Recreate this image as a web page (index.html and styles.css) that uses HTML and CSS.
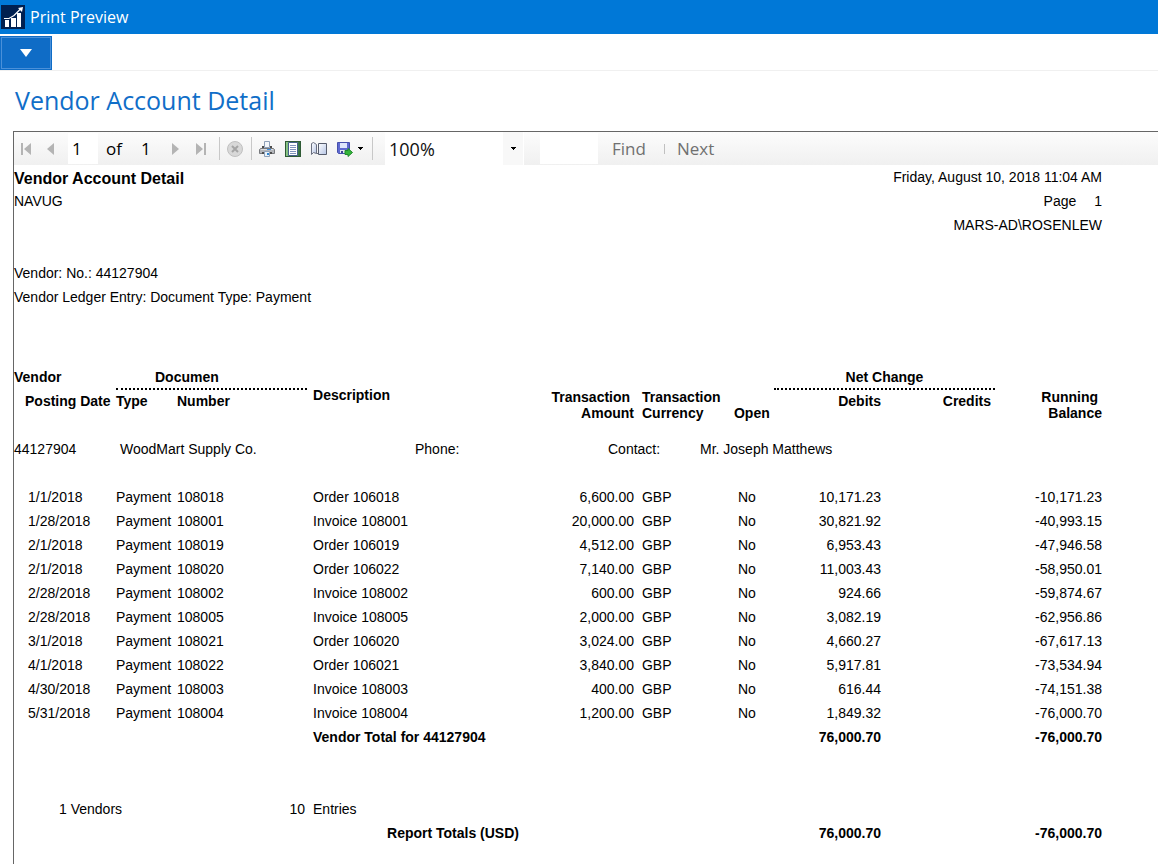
FILE: index.html
```html
<!DOCTYPE html>
<html lang="en">
<head>
  <meta charset="UTF-8">
  <meta name="viewport" content="width=device-width, initial-scale=1.0">
  <title>Print Preview</title>
  <link rel="stylesheet" href="styles.css">
</head>
<body>
  <header class="titlebar">
    <svg class="logo" width="24" height="24" viewBox="0 0 24 24">
      <rect width="24" height="24" fill="#002050"/>
      <path d="M4 15h4v7H4zM10 13h5v9h-5zM16 8h4v14h-4z" fill="#fff"/>
      <path d="M3 13.500h5l5-3 7-7" fill="none" stroke="#fff" stroke-width="1.200"/>
      <path d="M17 3l5-1-1 5z" fill="#fff"/>
    </svg>
    <span>Print Preview</span>
  </header>

  <nav class="ribbon">
    <button class="app-menu" aria-label="Application menu">
      <svg width="12" height="8" viewBox="0 0 12 8"><path d="M0 0h12L6 8z" fill="#fff"/></svg>
    </button>
  </nav>

  <h1>Vendor Account Detail</h1>

  <main class="viewer">
    <div class="toolbar">
      <div class="pager">
        <button aria-label="First page"><svg width="12" height="14" viewBox="0 0 12 14"><path d="M1 1h2v12H1zM11 1v12L4 7z" fill="#b4b4b4"/></svg></button>
        <button aria-label="Previous page"><svg width="12" height="14" viewBox="0 0 12 14"><path d="M9 1v12L2 7z" fill="#b4b4b4"/></svg></button>
        <input type="text" class="page-input" value="1" aria-label="Current page">
        <span class="of">of</span>
        <span class="count">1</span>
        <button aria-label="Next page"><svg width="12" height="14" viewBox="0 0 12 14"><path d="M3 1v12l7-6z" fill="#b4b4b4"/></svg></button>
        <button aria-label="Last page"><svg width="12" height="14" viewBox="0 0 12 14"><path d="M9 1h2v12H9zM1 1v12l7-6z" fill="#b4b4b4"/></svg></button>
      </div>
      <div class="group">
        <button aria-label="Stop">
          <svg width="16" height="16" viewBox="0 0 16 16"><circle cx="8" cy="8" r="7.500" fill="#d8d8d8" stroke="#c0c0c0"/><path d="M5 5l6 6M11 5l-6 6" stroke="#a4a4a4" stroke-width="2"/></svg>
        </button>
      </div>
      <div class="group tools">
        <button aria-label="Print">
          <svg width="16" height="16" viewBox="0 0 16 16">
            <path d="M5.500 .5h5v6h-5z" fill="#f4f7fb" stroke="#8fa0b8"/>
            <path d="M3 5h2v2h6V5h2v2H3z" fill="#4d4d4d"/>
            <path d="M1.500 7.500h13l1 1v4h-15v-4z" fill="#b4b6ba" stroke="#77797d"/>
            <path d="M2 8h12v1H2z" fill="#dcdde0"/>
            <path d="M8 8h4v1H8z" fill="#3f8fe0"/>
            <path d="M3 11h10v2H3z" fill="#4d4d4d"/>
            <path d="M5.500 10.500h5v5h-5z" fill="#e8f2fb" stroke="#8fa0b8"/>
            <path d="M8 12h2v2H8z" fill="#2f86d0"/>
          </svg>
        </button>
        <button aria-label="Print layout">
          <svg width="16" height="16" viewBox="0 0 16 16">
            <defs><linearGradient id="green"><stop offset="0" stop-color="#8fcb8a"/><stop offset="1" stop-color="#2f6b3d"/></linearGradient></defs>
            <rect x=".5" y=".5" width="15" height="15" fill="url(#green)" stroke="#2f5a35"/>
            <path d="M3.500 1.500h9v13h-9z" fill="#fff" stroke="#44608c"/>
            <path d="M5 4.500h6M5 6.500h6M5 8.500h6M5 10.500h6M5 12.500h6" stroke="#7f93bd"/>
          </svg>
        </button>
        <button aria-label="Page setup">
          <svg width="16" height="16" viewBox="0 0 16 16">
            <defs><linearGradient id="sheet" x2="1" y2="1"><stop offset="0" stop-color="#fff"/><stop offset="1" stop-color="#b5c4e4"/></linearGradient></defs>
            <path d="M.5 2.500l2-1 3 2v9l-3-1-2 2z" fill="url(#sheet)" stroke="#6b7080"/>
            <path d="M5.500 12.500h2" stroke="#6b7080"/>
            <path d="M7.500 2.500h8v11h-8z" fill="url(#sheet)" stroke="#565c6c"/>
          </svg>
        </button>
        <button class="export" aria-label="Export">
          <svg width="16" height="16" viewBox="0 0 16 16">
            <path d="M.5 1.500h12v11h-11l-1-1z" fill="#5f6ad0" stroke="#4650ac"/>
            <path d="M3 2h7v5H3z" fill="#dfe7fb"/>
            <path d="M3 9h6v3H3z" fill="#e4e6ee"/>
            <path d="M4 10h2v2H4z" fill="#3a4390"/>
            <path d="M8 9.500h3V7.500l4.500 4-4.500 4v-2H8z" fill="#35b53a" stroke="#1f8a2a"/>
          </svg>
          <svg width="5" height="3" viewBox="0 0 5 3"><path d="M0 0h5v1H4v1H3v1H2V2H1V1H0z"/></svg>
        </button>
      </div>
      <div class="zoom">
        <select aria-label="Zoom">
          <option>100%</option>
          <option>75%</option>
          <option>50%</option>
        </select>
        <span class="zoom-arrow"><svg width="5" height="3" viewBox="0 0 5 3"><path d="M0 0h5v1H4v1H3v1H2V2H1V1H0z"/></svg></span>
      </div>
      <div class="search">
        <input type="text" aria-label="Find text">
        <button>Find</button>
        <i></i>
        <button>Next</button>
      </div>
    </div>

    <section class="report">
      <div class="report-head">
        <div>
          <h2>Vendor Account Detail</h2>
          <p>NAVUG</p>
        </div>
        <div class="right">
          <p>Friday, August 10, 2018 11:04 AM</p>
          <p>Page <span class="page-no">1</span></p>
          <p>MARS-AD\ROSENLEW</p>
        </div>
      </div>
      <div class="filters">
        <p>Vendor: No.: 44127904</p>
        <p>Vendor Ledger Entry: Document Type: Payment</p>
      </div>

      <table>
        <colgroup>
          <col class="c-date"><col class="c-type"><col class="c-number"><col class="c-desc"><col class="c-amount">
          <col class="c-currency"><col class="c-open"><col class="c-debits"><col class="c-credits"><col class="c-balance">
        </colgroup>
        <thead>
          <tr class="head-top">
            <th>Vendor</th>
            <th colspan="2" class="dotted document">Documen</th>
            <th rowspan="2" class="desc head-desc">Description</th>
            <th rowspan="2" class="num">Transaction&nbsp;<br>Amount</th>
            <th rowspan="2" class="currency">Transaction<br>Currency</th>
            <th rowspan="2">Open</th>
            <th colspan="2" class="dotted net">Net Change</th>
            <th rowspan="2" class="num">Running&nbsp;<br>Balance</th>
          </tr>
          <tr class="head-sub">
            <th class="head-date">Posting Date</th>
            <th>Type</th>
            <th>Number</th>
            <th class="num pad">Debits</th>
            <th class="num pad">Credits</th>
          </tr>
        </thead>
        <tbody>
          <tr class="vendor">
            <td>44127904</td>
            <td colspan="9">
              <div class="vendor-info">
                <span>WoodMart Supply Co.</span><span>Phone:</span><span>Contact:</span><span>Mr. Joseph Matthews</span>
              </div>
            </td>
          </tr>
        </tbody>
        <tbody class="entries">
          <tr><td class="date">1/1/2018</td><td>Payment</td><td>108018</td><td class="desc">Order 106018</td><td class="num">6,600.00</td><td class="currency">GBP</td><td class="open">No</td><td class="num pad">10,171.23</td><td></td><td class="num">-10,171.23</td></tr>
          <tr><td class="date">1/28/2018</td><td>Payment</td><td>108001</td><td class="desc">Invoice 108001</td><td class="num">20,000.00</td><td class="currency">GBP</td><td class="open">No</td><td class="num pad">30,821.92</td><td></td><td class="num">-40,993.15</td></tr>
          <tr><td class="date">2/1/2018</td><td>Payment</td><td>108019</td><td class="desc">Order 106019</td><td class="num">4,512.00</td><td class="currency">GBP</td><td class="open">No</td><td class="num pad">6,953.43</td><td></td><td class="num">-47,946.58</td></tr>
          <tr><td class="date">2/1/2018</td><td>Payment</td><td>108020</td><td class="desc">Order 106022</td><td class="num">7,140.00</td><td class="currency">GBP</td><td class="open">No</td><td class="num pad">11,003.43</td><td></td><td class="num">-58,950.01</td></tr>
          <tr><td class="date">2/28/2018</td><td>Payment</td><td>108002</td><td class="desc">Invoice 108002</td><td class="num">600.00</td><td class="currency">GBP</td><td class="open">No</td><td class="num pad">924.66</td><td></td><td class="num">-59,874.67</td></tr>
          <tr><td class="date">2/28/2018</td><td>Payment</td><td>108005</td><td class="desc">Invoice 108005</td><td class="num">2,000.00</td><td class="currency">GBP</td><td class="open">No</td><td class="num pad">3,082.19</td><td></td><td class="num">-62,956.86</td></tr>
          <tr><td class="date">3/1/2018</td><td>Payment</td><td>108021</td><td class="desc">Order 106020</td><td class="num">3,024.00</td><td class="currency">GBP</td><td class="open">No</td><td class="num pad">4,660.27</td><td></td><td class="num">-67,617.13</td></tr>
          <tr><td class="date">4/1/2018</td><td>Payment</td><td>108022</td><td class="desc">Order 106021</td><td class="num">3,840.00</td><td class="currency">GBP</td><td class="open">No</td><td class="num pad">5,917.81</td><td></td><td class="num">-73,534.94</td></tr>
          <tr><td class="date">4/30/2018</td><td>Payment</td><td>108003</td><td class="desc">Invoice 108003</td><td class="num">400.00</td><td class="currency">GBP</td><td class="open">No</td><td class="num pad">616.44</td><td></td><td class="num">-74,151.38</td></tr>
          <tr><td class="date">5/31/2018</td><td>Payment</td><td>108004</td><td class="desc">Invoice 108004</td><td class="num">1,200.00</td><td class="currency">GBP</td><td class="open">No</td><td class="num pad">1,849.32</td><td></td><td class="num">-76,000.70</td></tr>
          <tr class="total"><td colspan="3"></td><td colspan="4" class="desc">Vendor Total for 44127904</td><td class="num pad">76,000.70</td><td></td><td class="num">-76,000.70</td></tr>
        </tbody>
        <tfoot>
          <tr class="counts"><td colspan="2" class="vendors">1 Vendors</td><td class="num entry-count">10</td><td colspan="7" class="desc">Entries</td></tr>
          <tr class="total"><td colspan="3"></td><td colspan="4" class="report-total">Report Totals (USD)</td><td class="num pad">76,000.70</td><td></td><td class="num">-76,000.70</td></tr>
        </tfoot>
      </table>
    </section>
  </main>
</body>
</html>
```
FILE: styles.css
```css
* {
  box-sizing: border-box;
}

body {
  display: flex;
  flex-direction: column;
  min-height: 100vh;
  margin: 0;
  background-color: #fff;
  color: #000;
  font-family: "Open Sans", "Noto Sans", sans-serif;
}

button,
input,
select {
  margin: 0;
  padding: 0;
  border: none;
  border-radius: 0;
  background: none;
  font-family: inherit;
}

button {
  display: flex;
  align-items: center;
  justify-content: center;
  cursor: pointer;
}

/* Window chrome */
.titlebar {
  display: flex;
  align-items: center;
  gap: 5px;
  height: 34px;
  padding-left: 1px;
  background-color: #0078d7;
  color: #fff;
  font-size: 16px;
}

.ribbon {
  height: 37px;
  padding-top: 2px;
  border-bottom: 1px solid #f0f0f0;
}

.app-menu {
  width: 52px;
  height: 34px;
  border: 1px solid #0f6cc6;
  background-color: #0f6cc6;
  box-shadow: inset 0 0 0 1px #4a90d9;
}

h1 {
  margin: 0;
  padding: 0 0 2px 15px;
  color: #106ec8;
  font-size: 25px;
  font-weight: normal;
  line-height: 58px;
}

.viewer {
  flex: 1;
  margin-left: 13px;
  border-top: 1px solid #666;
  border-left: 1px solid #666;
}

/* Report toolbar */
.toolbar {
  display: flex;
  align-items: stretch;
  height: 33px;
  background: linear-gradient(#fcfcfc, #f0f0f0);
  font-size: 17px;
}

.pager {
  display: flex;
  align-items: center;
  width: 205px;
}

.pager button {
  width: 26px;
  height: 30px;
}

.pager button:first-child {
  width: 24px;
}

.page-input {
  width: 30px;
  height: 31px;
  margin-left: 4px;
  padding-left: 4px;
  background-color: #fff;
  font-size: 17px;
}

.of {
  width: 34px;
  padding-left: 8px;
}

.count {
  width: 30px;
  padding-left: 9px;
}

.group {
  display: flex;
  align-items: center;
  margin: 5px 0;
  padding: 0 8px 0 7px;
  border-left: 1px solid #c8c8c8;
}

.tools {
  gap: 10px;
  width: 122px;
  border-right: 1px solid #c8c8c8;
}

.export {
  gap: 5px;
}

.zoom {
  position: relative;
  width: 139px;
  margin-left: 12px;
  background-color: #fff;
}

.zoom select {
  width: 100%;
  height: 33px;
  padding-left: 4px;
  appearance: none;
  color: #111;
  font-size: 18px;
}

.zoom-arrow {
  position: absolute;
  top: 0;
  right: 1px;
  display: flex;
  align-items: center;
  justify-content: center;
  width: 20px;
  height: 33px;
  background-color: #f8f8f8;
  pointer-events: none;
}

.search {
  display: flex;
  align-items: center;
  padding-left: 16px;
}

.search input {
  width: 58px;
  height: 31px;
  margin-right: 14px;
  background-color: #fff;
}

.search button {
  color: #707070;
  font-size: 17px;
}

.search i {
  width: 1px;
  height: 10px;
  margin: 0 12px 0 18px;
  background-color: #c0c0c0;
}

/* Report page */
.report {
  padding-right: 56px;
  font-family: "Liberation Sans", Arial, sans-serif;
  font-size: 14px;
  line-height: 24px;
}

.report p,
.report h2 {
  margin: 0;
}

.report h2 {
  height: 24px;
  font-size: 16px;
  line-height: 28px;
}

.report-head {
  display: flex;
  justify-content: space-between;
  height: 96px;
}

.right {
  text-align: right;
}

.page-no {
  padding-left: 14px;
}

.filters {
  height: 104px;
}

table {
  width: 100%;
  table-layout: fixed;
  border-spacing: 0;
}

th,
td {
  padding: 0;
  text-align: left;
  white-space: nowrap;
}

.c-date { width: 102px; }
.c-type { width: 61px; }
.c-number { width: 130px; }
.c-amount { width: 134px; }
.c-currency { width: 100px; }
.c-open { width: 40px; }
.c-debits { width: 111px; }
.c-credits { width: 110px; }
.c-balance { width: 107px; }

th {
  line-height: 16px;
  vertical-align: bottom;
}

.head-top th {
  height: 25px;
}

.head-top th:first-child,
.head-top .dotted {
  line-height: 24px;
  vertical-align: top;
}

.head-top .dotted {
  height: 25px;
  line-height: 22px;
  padding-top: 1px;
}

.head-sub th {
  height: 31px;
  line-height: 22px;
  vertical-align: top;
}

.dotted {
  border-bottom: 2px dotted #000;
}

.document {
  padding-left: 39px;
}

th.net {
  text-align: center;
}

.head-desc {
  padding-bottom: 18px;
}

.head-date {
  padding-left: 11px;
}

.num {
  text-align: right;
}

.num.pad {
  padding-right: 4px;
}

.desc {
  padding-left: 6px;
}

.currency {
  padding-left: 8px;
}

.open {
  padding-left: 4px;
}

.date {
  padding-left: 14px;
}

.vendor td {
  padding: 16px 0 24px;
}

.vendor-info {
  display: grid;
  grid-template-columns: 295px 193px 92px auto;
  padding-left: 4px;
}

.total {
  font-weight: bold;
}

.counts td {
  padding-top: 48px;
}

.counts .vendors {
  padding-left: 45px;
}

.counts .entry-count {
  padding-right: 2px;
}

.report-total {
  padding-left: 80px;
}
```
